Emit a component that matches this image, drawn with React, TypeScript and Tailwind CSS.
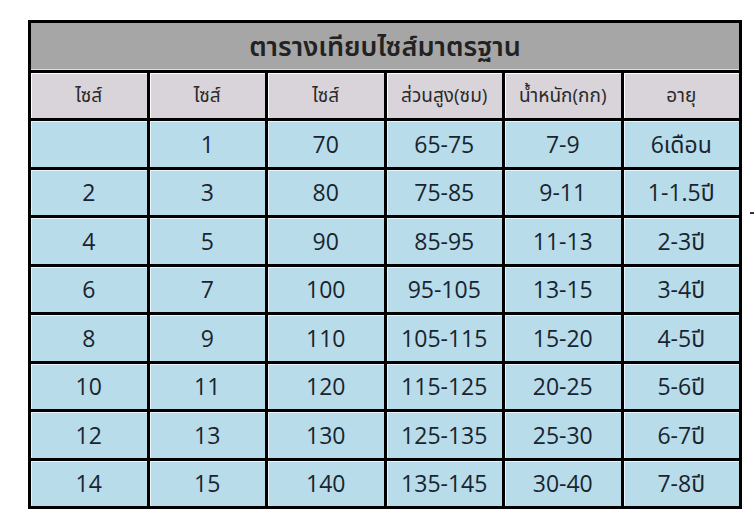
const headers = ["ไซส์", "ไซส์", "ไซส์", "ส่วนสูง(ซม)", "น้ำหนัก(กก)", "อายุ"];

const rows: string[][] = [
  ["", "1", "70", "65-75", "7-9", "6เดือน"],
  ["2", "3", "80", "75-85", "9-11", "1-1.5ปี"],
  ["4", "5", "90", "85-95", "11-13", "2-3ปี"],
  ["6", "7", "100", "95-105", "13-15", "3-4ปี"],
  ["8", "9", "110", "105-115", "15-20", "4-5ปี"],
  ["10", "11", "120", "115-125", "20-25", "5-6ปี"],
  ["12", "13", "130", "125-135", "25-30", "6-7ปี"],
  ["14", "15", "140", "135-145", "30-40", "7-8ปี"],
];

export default function App() {
  return (
    <div
      className="relative w-[755px] h-[531px] bg-white pt-[20px] pl-[28px]"
      style={{ fontFamily: '"Open Sans", "Noto Sans", "Noto Sans Thai", sans-serif' }}
    >
      <table className="w-[714px] border-collapse border-[3px] border-black table-fixed">
        <thead>
          <tr className="h-[50px]">
            <th
              colSpan={6}
              className="bg-[#a6a6a6] text-[27px] font-semibold text-[#222] text-center border-b-[3px] border-black shadow-[inset_0_-1px_0_#ddd]"
            >
              ตารางเทียบไซส์มาตรฐาน
            </th>
          </tr>
          <tr className="h-[48px]">
            {headers.map((h, i) => (
              <th
                key={i}
                className="bg-[#d9d4da] text-[19px] font-normal text-[#2a2a2a] text-center border-[3px] border-black shadow-[inset_1px_1px_0_#fff]"
              >
                {h}
              </th>
            ))}
          </tr>
        </thead>
        <tbody>
          {rows.map((r, ri) => (
            <tr key={ri} className="h-[48.5px]">
              {r.map((c, ci) => (
                <td
                  key={ci}
                  className="bg-[#b9dcea] text-[23px] text-[#18242f] text-center border-[3px] border-black shadow-[inset_1px_1px_0_#e8f4f9]"
                >
                  {c}
                </td>
              ))}
            </tr>
          ))}
        </tbody>
      </table>
      <span className="absolute left-[750px] top-[212px] w-[4px] h-[2px] bg-[#333]" />
    </div>
  );
}
